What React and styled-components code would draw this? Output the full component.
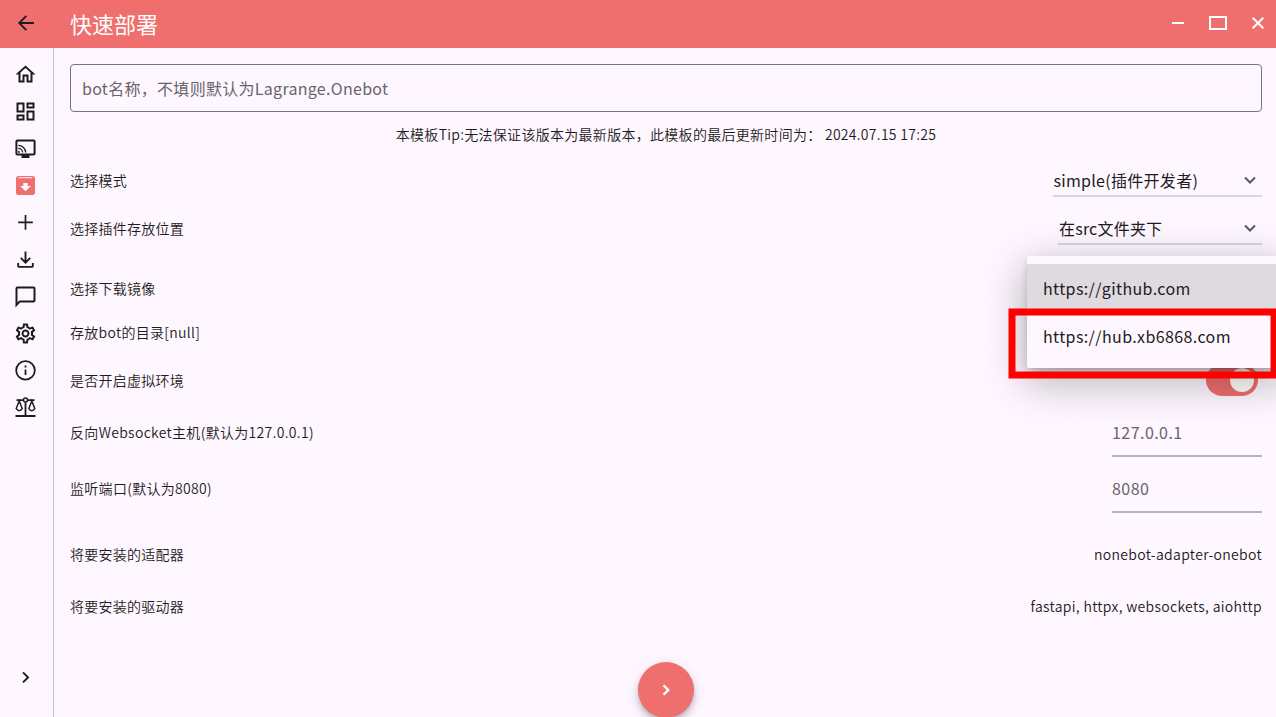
import React from "react";
import styled, { createGlobalStyle } from "styled-components";
import {
  MdOutlineHome,
  MdOutlineDashboard,
  MdOutlineSettings,
} from "react-icons/md";

const Global = createGlobalStyle`
  *, *::before, *::after { box-sizing: border-box; }
  body {
    margin: 0;
    overflow: hidden;
    background: #fef7ff;
    color: #1d1b20;
    font-family: "Noto Sans CJK SC", "Noto Sans", sans-serif;
    font-size: 14px;
    letter-spacing: 0.25px;
  }
`;

const Window = styled.div`
  height: 717px;
  display: flex;
  flex-direction: column;
  overflow: hidden;
  position: relative;
`;

const TitleBar = styled.header`
  flex: none;
  height: 48px;
  display: flex;
  align-items: center;
  background: #ef6e6e;
  color: #fff;
  padding: 0 6px 2px 14px;
`;

const Title = styled.h1`
  margin: 0 0 0 32px;
  flex: 1;
  font-size: 22px;
  line-height: 28px;
  font-weight: 400;
  letter-spacing: 0;
`;

const WindowButtons = styled.div`
  display: flex;
  gap: 16px;
`;

const Glyph = styled.svg`
  display: block;
  width: 24px;
  height: 24px;
  fill: none;
  stroke: currentColor;
  stroke-width: ${(p) => p.$weight || 2};
  color: ${(p) => p.$color || "inherit"};
`;

const Body = styled.div`
  flex: 1;
  min-height: 0;
  display: flex;
`;

const Rail = styled.nav`
  width: 54px;
  border-right: 1px solid #c4c0c8;
  display: flex;
  flex-direction: column;
  align-items: center;
  padding: 14px 1px 28px 0;
  gap: 13px;
  color: #1d1b20;
  svg { flex: none; width: 24px; height: 24px; transform: translate(-0.5px, 0.4px); }
`;

const Spacer = styled.div`
  flex: 1;
`;

const Page = styled.main`
  flex: 1;
  min-width: 0;
  display: flex;
  flex-direction: column;
  padding: 16px 14px 0 16px;
`;

const NameField = styled.div`
  flex: none;
  height: 48px;
  border: 1px solid #79747e;
  border-radius: 4px;
  padding: 0 11px;
  line-height: 47px;
  font-size: 16px;
  letter-spacing: 0.29px;
  color: #68646c;
`;

const Tip = styled.p`
  margin: 0;
  height: 45px;
  line-height: 44px;
  text-align: center;
  white-space: pre;
  font-weight: 350;
  letter-spacing: 0.29px;
`;

const Row = styled.div`
  flex: none;
  height: ${(p) => p.$h || 48}px;
  margin-top: ${(p) => p.$gap || 0}px;
  display: flex;
  align-items: center;
  justify-content: space-between;
  line-height: 20px;
  font-weight: 350;
  letter-spacing: ${(p) => p.$spacing || 0.25}px;
`;

const Value = styled.span`
  white-space: nowrap;
  letter-spacing: 0.32px;
`;

const Select = styled.div`
  width: ${(p) => p.$width}px;
  height: 33px;
  padding: 2px 0 0 ${(p) => p.$inset || 0}px;
  border-bottom: 2px solid #dad5dc;
  display: flex;
  align-items: center;
  justify-content: space-between;
  font-size: 16px;
  font-weight: 400;
  letter-spacing: ${(p) => p.$spacing || 0.15}px;
  color: #1d1b20;
`;

const UnderlineInput = styled.div`
  width: 150px;
  height: 48px;
  margin-top: 2px;
  border-bottom: 2px solid #b9b4bc;
  line-height: 47px;
  font-size: 16px;
  font-weight: 400;
  letter-spacing: 0.45px;
  color: #68646c;
`;

const Switch = styled.div`
  width: 52px;
  height: 32px;
  margin-right: 4px;
  padding: 4px;
  border-radius: 16px;
  background: #ef6e6e;
  display: flex;
  justify-content: flex-end;
  &::after {
    content: "";
    width: 24px;
    height: 24px;
    border-radius: 50%;
    background: #fff;
  }
`;

const NextButton = styled.button`
  flex: none;
  align-self: center;
  width: 56px;
  height: 56px;
  margin-top: 38px;
  padding: 0;
  border: 0;
  border-radius: 50%;
  background: #ef6e6e;
  color: #fff;
  display: flex;
  align-items: center;
  justify-content: center;
  box-shadow: 0 3px 5px -1px rgba(0, 0, 0, 0.2), 0 6px 10px rgba(0, 0, 0, 0.14), 0 1px 18px rgba(0, 0, 0, 0.06);
`;

const Menu = styled.div`
  position: absolute;
  left: 1027px;
  top: 256px;
  width: 260px;
  padding: 8px 0;
  border-radius: 2px;
  background: #fef7ff;
  box-shadow: 0 4px 8px -2px rgba(0, 0, 0, 0.26), 0 12px 44px 3px rgba(0, 0, 0, 0.28);
`;

const MenuItem = styled.div`
  height: 48px;
  padding: 0 16px;
  line-height: 48px;
  font-size: 16px;
  letter-spacing: 0.39px;
  color: #1d1b20;
  background: ${(p) => (p.$active ? "#dfd9e0" : "transparent")};
`;

const Highlight = styled.div`
  position: absolute;
  left: 1008px;
  top: 308px;
  width: 269px;
  height: 70px;
  border: 7px solid #f00;
  transform: translate(0.5px, 0.5px);
`;

const Arrow = ({ d, weight, color }) => (
  <Glyph viewBox="0 0 24 24" $weight={weight} $color={color}>
    <path d={d} />
  </Glyph>
);

const ScreenCast = () => (
  <Glyph viewBox="0 0 24 24">
    <rect x="2.9" y="4" width="18.2" height="14" rx="1" />
    <path d="M8 20h8" strokeWidth="3" />
    <path d="M4.8 9a7.4 7.4 0 0 1 7.4 7.2M4.8 12a4.3 4.3 0 0 1 4.3 4.2" strokeWidth="1.3" />
    <path d="M4.6 14.4a2 2 0 0 1 2 1.9h-2z" fill="currentColor" stroke="none" />
  </Glyph>
);

const Archive = () => (
  <Glyph viewBox="0 0 24 24" $color="#ef6e6e">
    <rect x="2.5" y="2.5" width="19" height="19" rx="2.5" fill="currentColor" stroke="none" />
    <path d="M5 4.3h14" stroke="#fef7ff" strokeWidth="1" />
    <path d="M9.8 9.5h4.4v3.2h3.2L12 17.8l-5.4-5.1h3.2z" fill="#fef7ff" stroke="none" />
  </Glyph>
);

const Download = () => (
  <Glyph viewBox="0 0 24 24">
    <path d="M12 4v11M7.3 10.5 12 15.2l4.7-4.7M4.7 15.5v3q0 1 1 1h12.6q1 0 1-1v-3" strokeWidth="1.9" />
  </Glyph>
);

const Chat = () => (
  <Glyph viewBox="0 0 24 24">
    <path d="M3 20.5V4q0-1 1-1h16q1 0 1 1v12q0 1-1 1H6.3z" />
  </Glyph>
);

const Info = () => (
  <Glyph viewBox="0 0 24 24" $weight={1.8}>
    <circle cx="12" cy="12" r="9.3" />
    <path d="M12 11v5.6M12 7.2v1.9" />
  </Glyph>
);

const Balance = () => (
  <Glyph viewBox="0 0 24 24" $weight={1.5}>
    <path d="M2 20.6h20M12 6.8v13.4M3 4.7h6.8M14.2 4.7H21" strokeWidth="1.8" />
    <circle cx="12" cy="4.7" r="2" />
    <path d="M5.7 5.5 2.7 13.2q3 4.2 6 0zM18.3 5.5l-3 7.7q3 4.2 6 0z" />
  </Glyph>
);

const CHEVRON_DOWN = "M7 9.5l5 5 5-5";
const CHEVRON_RIGHT = "M9.5 7l5 5-5 5";

export default function App() {
  return (
    <Window>
      <Global />
      <TitleBar>
        <Arrow d="M20 12H5M12.3 4.9 5.2 12l7.1 7.1" weight={1.8} color="#1d1b20" />
        <Title>快速部署</Title>
        <WindowButtons>
          <Arrow d="M6 12h12" />
          <Arrow d="M4 6h16v12H4z" />
          <Arrow d="M6.7 6.7l10.6 10.6M17.3 6.7 6.7 17.3" />
        </WindowButtons>
      </TitleBar>
      <Body>
        <Rail>
          <MdOutlineHome />
          <MdOutlineDashboard />
          <ScreenCast />
          <Archive />
          <Arrow d="M4.7 12h14.6M12 4.7v14.6" weight={1.7} />
          <Download />
          <Chat />
          <MdOutlineSettings />
          <Info />
          <Balance />
          <Spacer />
          <Arrow d={CHEVRON_RIGHT} />
        </Rail>
        <Page>
          <NameField>bot名称，不填则默认为Lagrange.Onebot</NameField>
          <Tip>本模板Tip:无法保证该版本为最新版本，此模板的最后更新时间为： 2024.07.15 17:25</Tip>
          <Row>
            选择模式
            <Select $width={209} $spacing={0.29} $inset={0.5}>
              simple(插件开发者)
              <Arrow d={CHEVRON_DOWN} color="#5b5760" />
            </Select>
          </Row>
          <Row>
            选择插件存放位置
            <Select $width={204} $spacing={0.2} $inset={1}>
              在src文件夹下
              <Arrow d={CHEVRON_DOWN} color="#5b5760" />
            </Select>
          </Row>
          <Row $gap={12}>选择下载镜像</Row>
          <Row $h={40} $spacing={0.3}>存放bot的目录[null]</Row>
          <Row $h={56}>
            是否开启虚拟环境
            <Switch />
          </Row>
          <Row $spacing={0.32}>
            反向Websocket主机(默认为127.0.0.1)
            <UnderlineInput>127.0.0.1</UnderlineInput>
          </Row>
          <Row $h={64} $spacing={0.3}>
            监听端口(默认为8080)
            <UnderlineInput>8080</UnderlineInput>
          </Row>
          <Row $h={68}>
            将要安装的适配器
            <Value>nonebot-adapter-onebot</Value>
          </Row>
          <Row $h={36}>
            将要安装的驱动器
            <Value>fastapi, httpx, websockets, aiohttp</Value>
          </Row>
          <NextButton>
            <Arrow d="M9.6 7.4l4.6 4.6-4.6 4.6" weight={2.4} />
          </NextButton>
        </Page>
      </Body>
      <Menu>
        <MenuItem $active>https://github.com</MenuItem>
        <MenuItem>https://hub.xb6868.com</MenuItem>
      </Menu>
      <Highlight />
    </Window>
  );
}
